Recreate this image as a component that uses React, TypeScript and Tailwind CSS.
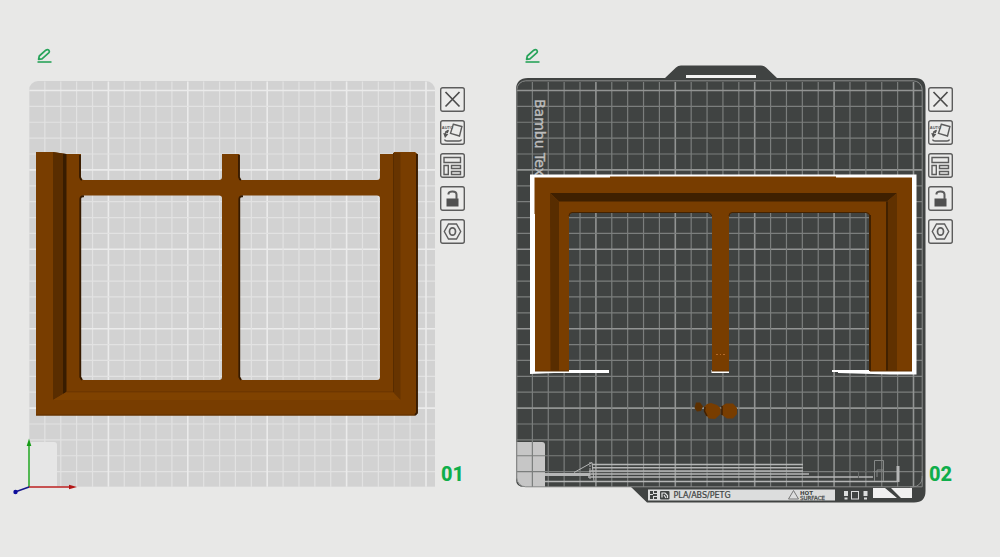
import type { ReactNode } from "react";

const STEP = 15.88;
const WOOD = "#783d00";

function Grid({ x, y, size, color, strong }: { x: number; y: number; size: number; color: string; strong: string }) {
  const lines = Array.from({ length: 25 }, (_, i) => i + 1);
  return (
    <g>
      {lines.map((i) => {
        const major = i % 5 === 0;
        const gx = x + i * STEP;
        const gy = y + size - i * STEP;
        return (
          <g key={i} stroke={major ? strong : color} strokeWidth={major ? 1.6 : 1.2}>
            <line x1={gx} x2={gx} y1={y} y2={y + size} />
            <line x1={x} x2={x + size} y1={gy} y2={gy} />
          </g>
        );
      })}
    </g>
  );
}

function LightPlate() {
  return (
    <svg viewBox="12 64 426 440" className="block h-auto w-full min-w-0 flex-1" role="img" aria-label="Plate 01">
      <clipPath id="light-clip">
        <path d="M29 487V90a9 9 0 0 1 9-9H426a9 9 0 0 1 9 9V487Z" />
      </clipPath>
      <g clipPath="url(#light-clip)">
        <rect x="29" y="81" width="406" height="406" fill="#d2d2d2" />
        <Grid x={29} y={81.5} size={406} color="#e2e2e2" strong="#ebebeb" />
        <path d="M29 81V487H435" fill="none" stroke="#e0e0e0" />
      </g>
      <path d="M29 442H54a3 3 0 0 1 3 3V487H29Z" fill="#e6e6e6" />

      <path
        fill={WOOD}
        fillRule="evenodd"
        d="M36 152H53L66 154H81V177Q81 180 84 180H219Q222 180 222 177V154H239.500V177Q239.500 180 242 180H377Q380 180 380 177V154H393L394 152H415L417.500 154V413L415 415.500H36Z
        M84 195.500Q81 195.500 81 198V377Q81 380 84 380H219Q222 380 222 377V198Q222 195.500 219 195.500Z
        M243 195.500Q240 195.500 240 198V377Q240 380 243 380H377Q380 380 380 377V198Q380 195.500 377 195.500Z"
      />
      <path d="M53 152L63 153.500V394L53 400Z" fill="#592d00" />
      <path d="M63 153.500L66.500 154V392L63 394Z" fill="#381c00" />
      <path d="M66.500 392H393L401 400H53Z" fill="#7f4200" />
      <path d="M66.500 391.800H393" stroke="#6a3500" strokeWidth="1" />
      <path d="M393 153H400.500V400L393 392Z" fill="#673400" />
      <path d="M393.500 153V392" stroke="#582c00" />
      <g stroke="#351a00" strokeWidth="1.8" fill="none">
        <path d="M80 155V177Q80.500 179.500 82 180" />
        <path d="M84 196.300Q80.500 196 80.300 199V377L82 380" />
        <path d="M239 155V177Q239.500 179.500 241 180" />
        <path d="M243 196.300Q239.500 196 239.300 199V377L241 380" />
        <path d="M417 154V413L415 415" />
      </g>
      <path d="M36 415H415" stroke="#5e3000" />

      <path d="M29 487V444" stroke="#22a722" strokeWidth="1.5" />
      <path d="M29 438.500L31.300 446H26.700Z" fill="#159c15" />
      <path d="M29 487H70" stroke="#bd2020" strokeWidth="1.5" />
      <path d="M77 487L69 489.300V484.700Z" fill="#b31515" />
      <path d="M29 487L15 492" stroke="#15158c" strokeWidth="1.5" />
      <circle cx="15.500" cy="492" r="2.200" fill="#0d0d9c" />
    </svg>
  );
}

function DarkPlate() {
  return (
    <svg viewBox="500 64 426 440" className="block h-auto w-full min-w-0 flex-1" role="img" aria-label="Plate 02">
      <path
        fill="#404342"
        d="M516 90Q516 78 528 78H665L676 67.500Q678 65.500 681 65.500H761Q764 65.500 766 67.500L777 78H915Q925.500 78 925.500 89V491Q925.500 502.500 914 502.500H647L631 487H524Q516 487 516 479Z"
      />
      <rect x="686" y="75" width="70" height="3" fill="#f3f3f3" />
      <clipPath id="dark-clip">
        <rect x="516.500" y="80.500" width="406" height="406.500" rx="9" />
      </clipPath>
      <g clipPath="url(#dark-clip)">
        <path d="M516 442H542a3 3 0 0 1 3 3V487H516Z" fill="#c6c6c6" />
        <Grid x={516.5} y={82} size={405.5} color="#7b7e7d" strong="#929493" />
      </g>
      <rect x="516.800" y="80.800" width="405.400" height="406" rx="9" fill="none" stroke="#898b8a" />
      <path d="M922.200 476V486.800H910" fill="none" stroke="#898b8a" />

      <text transform="translate(535 99) rotate(90)" fill="#bcbcbc" stroke="#bcbcbc" strokeWidth="0.400" fontSize="14" fontFamily="DejaVu Sans, sans-serif">
        Bambu Tex
      </text>

      <g fill="none" stroke="#b5b6b6">
        <path d="M592 464.500H803M592 467.700H803M589 471H803" strokeWidth="1.400" />
        <path d="M588 474H809M588 477H873" strokeWidth="1.400" />
        <path d="M545 474.500H590" strokeWidth="3" />
        <path d="M545 481.500H898" strokeWidth="1.500" />
        <path d="M574 472.500L592 462.500L594 481" />
        <path d="M590 462V480" strokeDasharray="2 1" />
        <path d="M898 466V482" strokeWidth="3" />
        <path d="M874.500 481V460.500H883.500V481M877 477V470H883" stroke="#858887" />
        <path d="M858.500 478V471.500H873" stroke="#666968" />
      </g>

      <path d="M530 174.500H916.500V374.500H890L838 373V372H832V370H872V213H568V370H609V373H554L530 374Z" fill="#fff" />
      <path d="M569 213H870V370H569Z" fill="#404342" />
      <clipPath id="opening-clip">
        <path d="M569 213H870V370H569Z" />
      </clipPath>
      <g clipPath="url(#opening-clip)">
        <Grid x={516.5} y={82} size={405.5} color="#7b7e7d" strong="#929493" />
      </g>
      <rect x="711.500" y="370" width="17.500" height="3" fill="#fff" />
      <path
        fill={WOOD}
        d="M534.500 177.500H610V176.500H836V177.500H912V371H869V216Q869 213 866 213H732Q729 213 729 216V371H712V216Q712 213 709 213H572Q569 213 569 216V371H535V214H534.500Z"
      />
      <path d="M550 193H897L887 201.500H559Z" fill="#3f2000" />
      <path d="M550 193L559 201.500V371H550.500Z" fill="#582d00" />
      <path d="M897 193L887 201.500V371H897Z" fill="#603100" />
      <path d="M887 201.500V371M870 215V371" stroke="#412100" strokeWidth="2" />
      <path d="M569 216Q569 212.500 572 212.500H709L712 216M729 216Q729 212.500 732 212.500H866Q869.500 212.500 870 216" fill="none" stroke="#452300" />
      <path d="M535 371H569M712 371H729M870 371H912" stroke="#5f3000" />
      <path d="M716 354.500h2m2 0h1m2 0h2" stroke="#b56b2a" />

      <path d="M696 402.500L700 402.500L703 406.500L701 411L697 411.500L694.500 408Z" fill="#5d3000" />
      <path d="M704 407L707 404L711 403L717 405L720.500 408V414L715 419L709 418.500L705 414Z" fill={WOOD} />
      <path d="M722 406L726 403.500H733L737 408V414L733 418.500H727L722 415Z" fill={WOOD} />
      <path d="M705 407L704.500 411L707 416M722 406V415" stroke="#422100" strokeWidth="1.500" fill="none" />

      <path d="M648 489.500H835V500.500H648Z" fill="#dcdddd" />
      <g fill="#404342">
        <path d="M650 491h3v3h-3zM654 491h3v2h-3zM650 495h3v4h-3zM653 494h4v2h-4zM654 497h3v2h-3z" />
        <rect x="660" y="491" width="9.500" height="8.500" rx="1" />
      </g>
      <path d="M662 497.500V493H665L667.500 495.500V498M664 495L666 498" stroke="#e4e4e4" strokeWidth="1.200" fill="none" />
      <g fill="#404342" fontFamily="DejaVu Sans, sans-serif">
        <text x="673.500" y="498" fontSize="8" stroke="#404342" strokeWidth="0.200">PLA/ABS/PETG</text>
        <text x="800" y="494.500" fontSize="5.500" fontWeight="700">HOT</text>
        <text x="800" y="499.500" fontSize="5.500" stroke="#404342" strokeWidth="0.250">SURFACE</text>
      </g>
      <path d="M793.500 490.500L798.500 499H788.500Z" fill="none" stroke="#777" />
      <path d="M844 491h4v5h-4zM844.500 497.500h3v2h-3zM863.500 491h4v5h-4zM864 497.500h3v2h-3z" fill="#dcdddd" />
      <rect x="851.500" y="491.500" width="7" height="7.500" fill="none" stroke="#dcdddd" />
      <path d="M873 488H885L897 498H873ZM891 488H912V498H901Z" fill="#f0f0f0" />
    </svg>
  );
}

function Glyph({ children }: { children: ReactNode }) {
  return (
    <svg viewBox="0 0 25 25" className="block h-full w-full" fill="none" stroke="#5c5c5c" strokeWidth="1.400" aria-hidden="true">
      <rect x="0.700" y="0.700" width="23.600" height="23.600" rx="2" fill="#ebebea" />
      {children}
    </svg>
  );
}

const tools: { label: string; icon: ReactNode }[] = [
  { label: "Remove plate", icon: <path d="M5.500 5L19.500 19.500M19.500 5L5.500 19.500" stroke="#4c4c4c" strokeWidth="1.700" /> },
  {
    label: "Auto orient",
    icon: (
      <>
        <text x="1.800" y="8.800" fontSize="4" fontWeight="700" fontFamily="Liberation Sans, sans-serif" fill="#565656" stroke="none">AUTO</text>
        <path d="M13.300 4.300L21.900 6.500L19.500 16L10.500 13.300Z" />
        <path d="M8.500 10.500Q5.500 11.500 5 14.500" />
        <path d="M3.200 13L8.300 14.200L5 18ZM5 11.500L8.800 9.800L7.800 13.500Z" fill="#565656" stroke="none" />
        <path d="M4.500 19.500Q5 21 7 21H19Q21 21 21.500 19.500" />
      </>
    ),
  },
  {
    label: "Arrange",
    icon: <path d="M4 4.500H20.500V9.500H4ZM4 12.500H8.300V21.500H4ZM11.500 12.500H20.500V15.500H11.500ZM11.500 18.500H20.500V21.500H11.500Z" />,
  },
  {
    label: "Unlock plate",
    icon: (
      <>
        <rect x="6.500" y="12.500" width="12" height="8" fill="#505050" stroke="none" />
        <path d="M8.500 8.500V7.500Q9 5.500 12.500 5.500Q16.500 5.500 16.500 8.500V13" strokeWidth="2" />
      </>
    ),
  },
  {
    label: "Plate settings",
    icon: (
      <>
        <path d="M8.500 5H16.500L20.700 12.500L16.500 20H8.500L4.300 12.500Z" />
        <ellipse cx="12.500" cy="12.500" rx="3" ry="3.700" strokeWidth="1.700" />
      </>
    ),
  },
];

function Panel({ number, children }: { number: string; children: ReactNode }) {
  return (
    <section className="min-w-0">
      <button type="button" aria-label={`Rename plate ${number}`} className="ml-6 block h-4 w-4">
        <svg viewBox="0 0 16 16" className="block h-4 w-4" fill="none" stroke="#27a35a" aria-hidden="true">
          <path d="M3.300 8L9.800 2.200Q11.500 1 12.800 2.200Q13.900 3.500 12.700 4.800L6 10.800L2.600 11.300Z" strokeWidth="1.700" strokeLinejoin="round" />
          <path d="M1.500 14H15.500" strokeWidth="1.600" />
        </svg>
      </button>
      <div className="flex gap-0.5">
        {children}
        <div className="flex w-[25px] shrink-0 flex-col justify-between pt-[23px] pb-[18px]">
          <div className="flex flex-col gap-2">
            {tools.map((tool) => (
              <button key={tool.label} type="button" aria-label={tool.label} className="block h-[25px] w-[25px]">
                <Glyph>{tool.icon}</Glyph>
              </button>
            ))}
          </div>
          <span className="text-center font-[Roboto,sans-serif] text-xl leading-6 font-extrabold text-[#0fae4b]">{number}</span>
        </div>
      </div>
    </section>
  );
}

export default function App() {
  return (
    <main className="grid min-h-screen grid-cols-2 content-start gap-[35px] bg-[#e8e8e7] pt-12 pr-[47px] pl-3">
      <Panel number="01">
        <LightPlate />
      </Panel>
      <Panel number="02">
        <DarkPlate />
      </Panel>
    </main>
  );
}
